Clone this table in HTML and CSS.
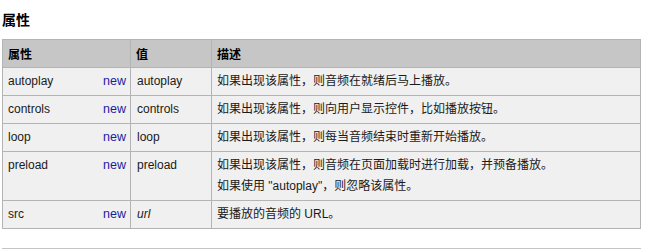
FILE: index.html
```html
<!DOCTYPE html>
<html lang="zh">
<head>
<meta charset="utf-8">
<link rel="stylesheet" href="styles.css">
</head>
<body>
<div class="page">
  <h2 class="title">属性</h2>
  <table class="attrs">
    <colgroup><col class="c1"><col class="c2"><col class="c3"></colgroup>
    <thead>
      <tr><th>属性</th><th>值</th><th>描述</th></tr>
    </thead>
    <tbody>
      <tr><td><span class="name">autoplay</span><span class="new">new</span></td><td>autoplay</td><td>如果出现该属性，则音频在就绪后马上播放。</td></tr>
      <tr><td><span class="name">controls</span><span class="new">new</span></td><td>controls</td><td>如果出现该属性，则向用户显示控件，比如播放按钮。</td></tr>
      <tr><td><span class="name">loop</span><span class="new">new</span></td><td>loop</td><td>如果出现该属性，则每当音频结束时重新开始播放。</td></tr>
      <tr><td><span class="name">preload</span><span class="new">new</span></td><td>preload</td><td>如果出现该属性，则音频在页面加载时进行加载，并预备播放。<span class="line2">如果使用 "autoplay"，则忽略该属性。</span></td></tr>
      <tr><td><span class="name">src</span><span class="new">new</span></td><td><i>url</i></td><td>要播放的音频的 URL。</td></tr>
    </tbody>
  </table>
  <hr class="rule">
</div>
</body>
</html>
```
FILE: styles.css
```css
html, body { margin: 0; padding: 0; background: #fff; }
body {
  font-family: "Liberation Sans", Arial, "Noto Sans CJK SC", sans-serif;
  font-size: 12px;
  color: #000;
}
.page { padding: 0 8px 0 2px; }
.title {
  margin: 0;
  padding-top: 11px;
  height: 28px;
  box-sizing: border-box;
  font-size: 14px;
  line-height: 16px;
  font-weight: bold;
  font-family: "Noto Sans CJK SC", sans-serif;
}
.attrs {
  width: 639px;
  border-collapse: collapse;
  border: 1px solid #aaa;
  table-layout: fixed;
  margin-top: 11px;
}
.c1 { width: 128px; }
.c2 { width: 81px; }
.attrs th, .attrs td {
  border: 1px solid #b4b4b4;
  padding: 4px 4px 4px 5px;
  line-height: 19px;
  vertical-align: top;
  text-align: left;
}
.attrs th {
  background: #c6c6c6;
  font-weight: bold;
  font-family: "Noto Sans CJK SC", sans-serif;
  font-size: 12px;
  padding-left: 5px;
}
.attrs td { background: #f0f0f0; color: #1a1a1a; }
.attrs td:nth-child(2) { padding-left: 6px; }
.name { float: left; }
.new { float: right; color: #1c1ca0; font-size: 12.5px; }
.line2 { display: block; margin-top: 2px; }
.rule {
  border: 0;
  border-top: 1px solid #c4c4c4;
  margin: 19px 0 0 0;
  width: 639px;
}
```
